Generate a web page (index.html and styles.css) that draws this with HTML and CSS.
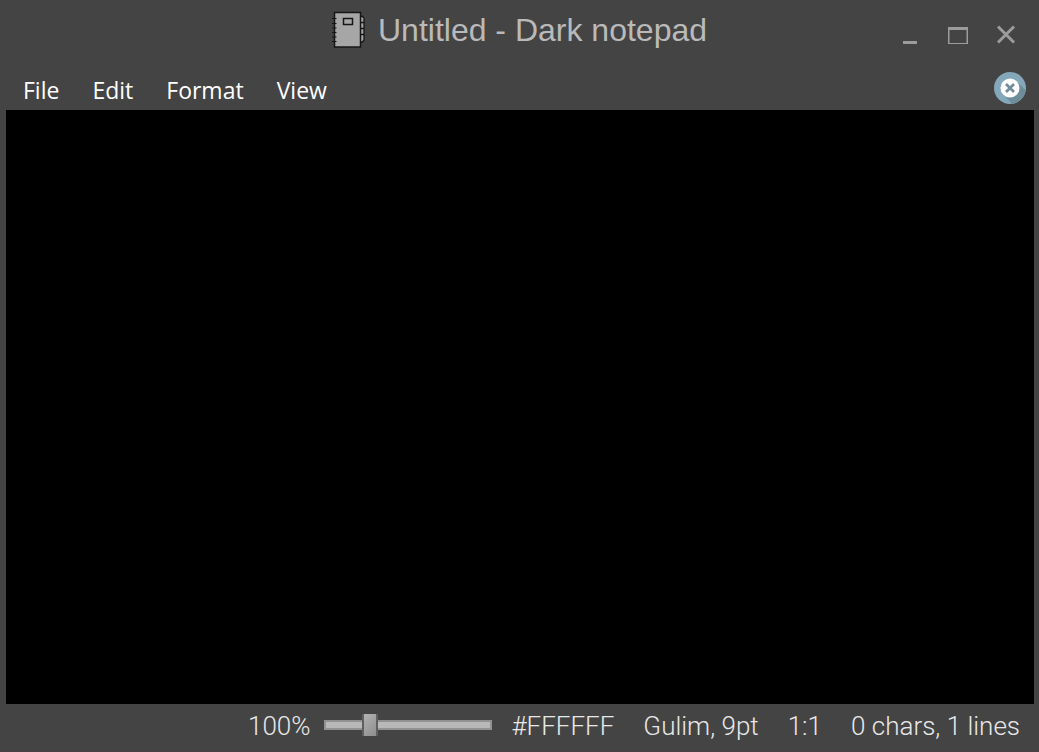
FILE: index.html
```html
<!DOCTYPE html>
<html lang="en">
<head>
<meta charset="utf-8">
<title>Untitled - Dark notepad</title>
<link rel="stylesheet" href="styles.css">
</head>
<body>
<div class="window">
  <header class="titlebar">
    <div class="title">
      <svg class="title-icon" width="34" height="38" viewBox="0 0 34 38" aria-hidden="true">
        <path d="M28 5.500h2.500l1.500 1.500v22l-1.500 2h-2.500z" fill="#a6a6a6" stroke="#161616" stroke-width="1.300"/>
        <path d="M28 11.500h4M28 17.500h4M28 23.500h4" stroke="#161616" stroke-width="1.300"/>
        <rect x="2.500" y="1.500" width="26" height="34.500" fill="#a6a6a6" stroke="#161616" stroke-width="1.500"/>
        <path d="M0 7.500h4.500M0 12.500h4.500M0 17h4.500M0 21.500h4.500M0 26h4.500M0 30.500h4.500" stroke="#161616" stroke-width="1.200"/>
        <rect x="11.500" y="7.500" width="9" height="6" fill="#a6a6a6" stroke="#161616" stroke-width="1.500"/>
      </svg>
      <h1 class="title-text">Untitled - Dark notepad</h1>
    </div>
    <div class="controls">
      <button class="control" type="button" aria-label="Minimize"><svg width="20" height="20" viewBox="0 0 20 20"><path d="M3 16h14v3H3z" fill="#9c9c9c"/></svg></button>
      <button class="control" type="button" aria-label="Maximize"><svg width="20" height="20" viewBox="0 0 20 20"><path fill-rule="evenodd" d="M0 2h20v17H0zM1.500 5v13h17V5z" fill="#9c9c9c"/></svg></button>
      <button class="control" type="button" aria-label="Close"><svg width="20" height="20" viewBox="0 0 20 20"><path d="M2 1.500l16 16M18 1.500l-16 16" stroke="#9c9c9c" stroke-width="3"/></svg></button>
    </div>
  </header>
  <nav class="menubar">
    <button class="menu" type="button">File</button>
    <button class="menu" type="button">Edit</button>
    <button class="menu" type="button">Format</button>
    <button class="menu" type="button">View</button>
    <button class="dismiss" type="button" aria-label="Dismiss">
      <svg width="32" height="32" viewBox="0 0 32 32">
        <circle cx="16" cy="16" r="16" fill="#84a7b9"/>
        <path d="M23 10l8.500 8A16 16 0 0 1 18 31.900l-7-8z" fill="#6e8d9b"/>
        <circle cx="16" cy="16" r="9.500" fill="#fff"/>
        <path d="M12 12l8 8M20 12l-8 8" stroke="#6f8d9b" stroke-width="2.600"/>
      </svg>
    </button>
  </nav>
  <textarea class="editor" aria-label="Document text" spellcheck="false"></textarea>
  <footer class="statusbar">
    <div class="zoom">
      <label for="zoom">100%</label>
      <input id="zoom" class="slider" type="range" min="10" max="390" value="100">
    </div>
    <span>#FFFFFF</span>
    <span>Gulim, 9pt</span>
    <span>1:1</span>
    <span>0 chars, 1 lines</span>
  </footer>
</div>
</body>
</html>
```
FILE: styles.css
```css
* { box-sizing: border-box; }

body {
  margin: 0;
  background: #444;
}

button {
  margin: 0;
  padding: 0;
  border: 0;
  background: none;
}

svg { display: block; }

.window {
  display: flex;
  flex-direction: column;
  height: 100vh;
  border-bottom: 1px solid #4a4246;
}

.titlebar {
  display: grid;
  grid-template-columns: 1fr auto 1fr;
  height: 72px;
}

.title {
  grid-column: 2;
  display: flex;
  gap: 12px;
  align-items: center;
  height: 60px;
}

.title-text {
  margin: 0;
  color: #bababa;
  font: 400 32px/40px "Liberation Sans", Arial, sans-serif;
  white-space: nowrap;
}

.controls {
  display: flex;
  justify-content: flex-end;
  align-items: center;
  gap: 28px;
  height: 70px;
  padding-right: 23px;
}

.menubar {
  display: flex;
  align-items: flex-start;
  gap: 33px;
  height: 38px;
  padding: 0 13px 0 23px;
}

.menu {
  color: #fff;
  font: 400 23px/36px "Open Sans", sans-serif;
}

.dismiss {
  margin-left: auto;
}

.editor {
  flex: 1;
  margin: 0 5px 0 6px;
  padding: 4px;
  border: 0;
  outline: 0;
  resize: none;
  background: #000;
  color: #fff;
  font: 24px/32px "Liberation Sans", Arial, sans-serif;
}

.statusbar {
  display: flex;
  justify-content: flex-end;
  gap: 29px;
  height: 47px;
  padding: 6px 19px 0 0;
  color: #e8e8e8;
  font: 300 26px/32px Roboto, "Liberation Sans", sans-serif;
  white-space: nowrap;
}

.zoom {
  display: flex;
  gap: 14px;
  margin-right: -10px;
}

.slider {
  appearance: none;
  width: 168px;
  height: 30px;
  margin: 0;
  background: none;
}

.slider::-webkit-slider-runnable-track {
  height: 10px;
  border: 2px solid #929292;
  background: #b8b8b8;
}

.slider::-webkit-slider-thumb {
  appearance: none;
  width: 16px;
  height: 22px;
  margin-top: -8px;
  border: solid #5f5f5f;
  border-width: 0 2px;
  border-radius: 1px;
  background: linear-gradient(135deg, #b2b2b2, #8e8e8e);
}
```
